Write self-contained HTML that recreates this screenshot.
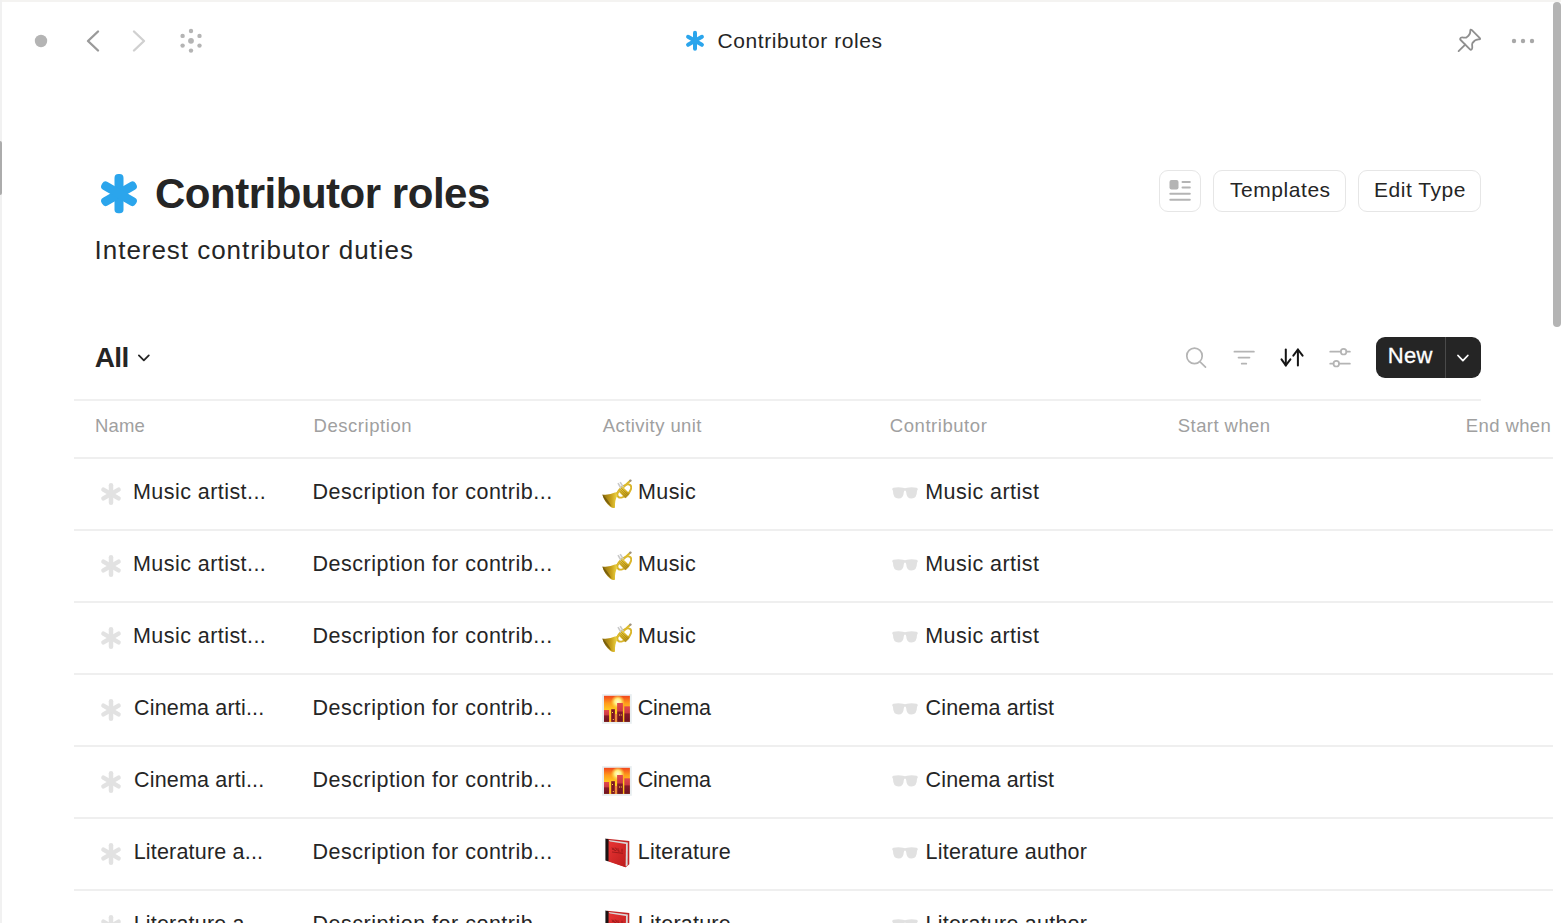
<!DOCTYPE html>
<html><head><meta charset="utf-8"><title>Contributor roles</title>
<style>
html,body{margin:0;padding:0;width:1561px;height:923px;overflow:hidden;background:#fff;font-family:"Liberation Sans",sans-serif;color:#252525}
.a{position:absolute}
.t{position:absolute;white-space:nowrap;line-height:1}
.hd{font-size:18.5px;color:#a0a0a0;top:417px}
.rw{font-size:21.5px;color:#252525}
.ln{position:absolute;left:74px;width:1479px;height:2px;background:#efefef}
.btn{position:absolute;top:170px;height:42px;box-sizing:border-box;border:1.5px solid #e6e6e6;border-radius:9px}
</style></head><body>
<!-- frame -->
<div class="a" style="left:0;top:0;width:1561px;height:2px;background:#f4f3f1"></div>
<div class="a" style="left:0;top:0;width:2px;height:923px;background:#f1f1f1"></div>
<div class="a" style="left:0;top:141px;width:2px;height:54px;background:#acacac;border-radius:0 2px 2px 0"></div>
<div class="a" style="left:1553px;top:2px;width:8px;height:324.5px;background:#b4b4b4;border-radius:4px"></div>

<!-- top bar -->
<svg class="a" style="left:0;top:0" width="240" height="80" viewBox="0 0 240 80">
  <circle cx="41" cy="41" r="6.2" fill="#b4b4b4"/>
  <polyline points="98,31.5 88,41 98,50.5" fill="none" stroke="#9a9a9a" stroke-width="2.4" stroke-linecap="round" stroke-linejoin="round"/>
  <polyline points="134,31.5 144,41 134,50.5" fill="none" stroke="#d0d0d0" stroke-width="2.4" stroke-linecap="round" stroke-linejoin="round"/>
  <g fill="#b4b4b4">
    <circle cx="191" cy="31" r="2.2"/><circle cx="191" cy="50.6" r="2.2"/>
    <circle cx="182.6" cy="35.9" r="2.2"/><circle cx="182.6" cy="45.6" r="2.2"/>
    <circle cx="199.5" cy="35.9" r="2.2"/><circle cx="199.5" cy="45.6" r="2.2"/>
    <circle cx="191" cy="40.8" r="2.9"/>
  </g>
</svg>
<svg class="a" style="left:680px;top:26px" width="30" height="30" viewBox="0 0 30 30">
  <g stroke="#2ba5ec" stroke-width="4" stroke-linecap="round">
    <line x1="15" y1="6.8" x2="15" y2="22.8"/>
    <line x1="8.07" y1="10.8" x2="21.93" y2="18.8"/>
    <line x1="8.07" y1="18.8" x2="21.93" y2="10.8"/>
  </g>
</svg>
<div class="t" style="left:717.6px;top:29.5px;font-size:21px;letter-spacing:0.58px">Contributor roles</div>
<svg class="a" style="left:1440px;top:20px" width="110" height="40" viewBox="0 0 110 40">
  <g transform="translate(30.5 19.25) rotate(45)" fill="none" stroke="#8f8f8f" stroke-width="1.8" stroke-linejoin="round" stroke-linecap="round">
    <path d="M-5.8 -7.4 L5.8 -7.4 Q7.2 -7.2 6.3 -6 C4.2 -4.2 3.6 -1.5 4.1 1.4 C4.8 3.6 7.8 4 7.9 6 Q7.9 7.5 6.8 7.5 L-6.8 7.5 Q-7.9 7.5 -7.9 6 C-7.8 4 -4.8 3.6 -4.1 1.4 C-3.6 -1.5 -4.2 -4.2 -6.3 -6 Q-7.2 -7.2 -5.8 -7.4 Z"/>
    <line x1="0" y1="7.5" x2="0" y2="16.8"/>
  </g>
  <g fill="#a8a8a8"><circle cx="74" cy="21" r="2.2"/><circle cx="83" cy="21" r="2.2"/><circle cx="92" cy="21" r="2.2"/></g>
</svg>

<!-- title -->
<svg class="a" style="left:99px;top:174px" width="40" height="40" viewBox="0 0 40 40">
  <g fill="#2ba5ec">
    <rect x="15.5" y="0.1" width="9" height="39.2" rx="3.8"/>
    <rect x="15.5" y="0.1" width="9" height="39.2" rx="3.8" transform="rotate(60 20 19.7)"/>
    <rect x="15.5" y="0.1" width="9" height="39.2" rx="3.8" transform="rotate(-60 20 19.7)"/>
  </g>
</svg>
<div class="t" style="left:155px;top:173px;font-size:42px;font-weight:bold;letter-spacing:-0.48px">Contributor roles</div>
<div class="t" style="left:94.6px;top:237px;font-size:26px;letter-spacing:0.96px">Interest contributor duties</div>

<!-- buttons -->
<div class="btn" style="left:1159px;width:42px"></div>
<svg class="a" style="left:1159px;top:170px" width="42" height="42" viewBox="0 0 42 42">
  <rect x="10.5" y="10" width="9" height="9.5" rx="2" fill="#b4b4b4"/>
  <g stroke="#b4b4b4" stroke-width="2" stroke-linecap="round">
    <line x1="23.5" y1="11.9" x2="30.8" y2="11.9"/>
    <line x1="23.5" y1="17.5" x2="30.8" y2="17.5"/>
    <line x1="11.3" y1="23.7" x2="30.8" y2="23.7"/>
    <line x1="11.3" y1="29.7" x2="30.8" y2="29.7"/>
  </g>
</svg>
<div class="btn" style="left:1213px;width:133px"></div>
<div class="t" style="left:1230px;top:179px;font-size:21px;letter-spacing:0.55px">Templates</div>
<div class="btn" style="left:1358px;width:123px"></div>
<div class="t" style="left:1374px;top:179px;font-size:21px;letter-spacing:0.54px">Edit Type</div>

<!-- view bar -->
<div class="t" style="left:94.8px;top:344px;font-size:28px;font-weight:bold;letter-spacing:-0.67px">All</div>
<svg class="a" style="left:130px;top:345px" width="30" height="25" viewBox="0 0 30 25">
  <polyline points="8.9,10.4 13.85,15.3 18.8,10.4" fill="none" stroke="#252525" stroke-width="1.8" stroke-linecap="round" stroke-linejoin="round"/>
</svg>
<svg class="a" style="left:1170px;top:330px" width="200" height="50" viewBox="0 0 200 50">
  <g fill="none" stroke="#b4b4b4" stroke-width="1.7" stroke-linecap="round">
    <circle cx="24.5" cy="25.9" r="7.7"/>
    <line x1="30.6" y1="32.4" x2="35.5" y2="37.2"/>
    <line x1="64.4" y1="21.7" x2="83.9" y2="21.7"/>
    <line x1="68.5" y1="27.6" x2="79.5" y2="27.6"/>
    <line x1="71.7" y1="33.7" x2="76.3" y2="33.7"/>
  </g>
  <g fill="none" stroke="#151515" stroke-width="2" stroke-linecap="round" stroke-linejoin="round">
    <line x1="115.8" y1="19.4" x2="115.8" y2="35.4"/>
    <polyline points="111.5,29.3 115.8,35.4 120.4,29.3"/>
    <line x1="127.9" y1="19.5" x2="127.9" y2="35.6"/>
    <polyline points="123.3,25.7 127.9,19.5 132.6,25.7"/>
  </g>
  <g fill="none" stroke="#b4b4b4" stroke-width="1.7" stroke-linecap="round">
    <line x1="160.2" y1="21.7" x2="170.8" y2="21.7"/>
    <line x1="176.4" y1="21.7" x2="179.9" y2="21.7"/>
    <circle cx="173.6" cy="21.7" r="2.8"/>
    <line x1="160.2" y1="33.7" x2="163.5" y2="33.7"/>
    <line x1="169.1" y1="33.7" x2="179.9" y2="33.7"/>
    <circle cx="166.3" cy="33.7" r="2.8"/>
  </g>
</svg>
<div class="a" style="left:1376px;top:337px;width:105px;height:41px;background:#252525;border-radius:9px"></div>
<div class="a" style="left:1445px;top:337px;width:1px;height:41px;background:#4a4a4a"></div>
<div class="t" style="left:1387.8px;top:345px;font-size:22px;letter-spacing:0.3px;color:#fff;-webkit-text-stroke:0.3px #fff">New</div>
<svg class="a" style="left:1446px;top:337px" width="35" height="41" viewBox="0 0 35 41">
  <polyline points="12,18.5 16.9,23.6 21.8,18.5" fill="none" stroke="#fff" stroke-width="1.8" stroke-linecap="round" stroke-linejoin="round"/>
</svg>

<!-- table -->
<div class="a" style="left:74px;top:399px;width:1407px;height:2px;background:#f0f0f0"></div>
<div class="t hd" style="left:94.9px;letter-spacing:0.2px">Name</div>
<div class="t hd" style="left:313.5px;letter-spacing:0.55px">Description</div>
<div class="t hd" style="left:602.8px;letter-spacing:0.43px">Activity unit</div>
<div class="t hd" style="left:889.8px;letter-spacing:0.55px">Contributor</div>
<div class="t hd" style="left:1177.8px;letter-spacing:0.43px">Start when</div>
<div class="t hd" style="left:1465.8px;letter-spacing:0.39px">End when</div>
<div class="ln" style="top:457px"></div>
<div class="ln" style="top:529px"></div>
<div class="ln" style="top:601px"></div>
<div class="ln" style="top:673px"></div>
<div class="ln" style="top:745px"></div>
<div class="ln" style="top:817px"></div>
<div class="ln" style="top:889px"></div>

<svg width="0" height="0" style="position:absolute">
<defs>
<linearGradient id="gold" x1="0" y1="0" x2="1" y2="1"><stop offset="0" stop-color="#f3dc5a"/><stop offset="0.5" stop-color="#d9b324"/><stop offset="1" stop-color="#9c7a12"/></linearGradient>
<linearGradient id="bellg" x1="0" y1="0" x2="1" y2="0"><stop offset="0" stop-color="#8a6a0c"/><stop offset="0.6" stop-color="#c9a21c"/><stop offset="1" stop-color="#f0d848"/></linearGradient>
<linearGradient id="sky" x1="0" y1="0" x2="0" y2="1"><stop offset="0" stop-color="#f2441c"/><stop offset="0.28" stop-color="#ff9a1c"/><stop offset="0.6" stop-color="#ffd420"/><stop offset="1" stop-color="#ffb81a"/></linearGradient>
<radialGradient id="sun" cx="0.5" cy="0.5" r="0.5"><stop offset="0" stop-color="#fffbd0"/><stop offset="0.45" stop-color="#fff080"/><stop offset="1" stop-color="#ffe040" stop-opacity="0"/></radialGradient>
<linearGradient id="bld" x1="0" y1="0" x2="0" y2="1"><stop offset="0" stop-color="#e2484c"/><stop offset="0.4" stop-color="#cc3a42"/><stop offset="0.5" stop-color="#861a2a"/><stop offset="1" stop-color="#6e1222"/></linearGradient>
<linearGradient id="bookg" x1="0" y1="0" x2="1" y2="1"><stop offset="0" stop-color="#e83434"/><stop offset="1" stop-color="#bd1d1d"/></linearGradient>
<symbol id="music" viewBox="0 0 30 30">
  <ellipse cx="22.3" cy="12" rx="8.4" ry="4.6" transform="rotate(-43 22.3 12)" fill="none" stroke="#d9b52a" stroke-width="1.9"/>
  <line x1="13" y1="16" x2="28.2" y2="1.8" stroke="#dcba2c" stroke-width="2.1" stroke-linecap="round"/>
  <g stroke="#c8c8c8" stroke-width="1.6"><line x1="16" y1="4.2" x2="19.5" y2="10"/><line x1="18.2" y1="3.2" x2="21.4" y2="8.4"/></g>
  <polygon points="27.8,14.8 23.3,19.3 16.2,12.2 20.7,7.7" fill="url(#gold)"/>
  <g stroke="#9e7e12" stroke-width="0.7"><line x1="18.1" y1="10.3" x2="25.2" y2="17.4"/><line x1="19.2" y1="9.1" x2="26.3" y2="16.2"/><line x1="17" y1="11.4" x2="24.1" y2="18.5"/></g>
  <path d="M0.3 15.4 Q7 16.4 13.6 13.2 L15.4 16.4 Q12.6 21 13 28.6 Q11.5 30 8 27.5 Q2 22 0.3 15.4 Z" fill="url(#bellg)"/>
  <path d="M0.5 15.8 Q2.5 23 9.5 27.5 Q5.2 19.5 0.5 15.8 Z" fill="#5e4a08" opacity="0.6"/>
  <circle cx="28.4" cy="1.6" r="1.2" fill="#9a8f86"/>
</symbol>
<symbol id="city" viewBox="0 0 30 30">
  <rect x="0.1" y="0.15" width="29.7" height="29.65" fill="#e8eef0"/>
  <rect x="2" y="1.8" width="25.9" height="26.1" fill="url(#sky)"/>
  <circle cx="15.8" cy="7.8" r="7" fill="url(#sun)"/>
  <path d="M2 16 L7.1 16 L7.1 27.9 L2 27.9 Z" fill="url(#bld)"/>
  <rect x="9.2" y="15.2" width="3.7" height="12.7" fill="#7e1626"/>
  <path d="M15.1 9 L20.9 9 L20.9 27.9 L15.1 27.9 Z" fill="url(#bld)"/>
  <path d="M22.3 12.3 L27.9 12.3 L27.9 27.9 L22.3 27.9 Z" fill="url(#bld)"/>
  <rect x="12.9" y="20" width="2.2" height="7.9" fill="#f08a3a"/>
  <g fill="#ffd24a"><rect x="10" y="18" width="1" height="1"/><rect x="17" y="20.5" width="1" height="1"/><rect x="18.8" y="20.5" width="1" height="1"/><rect x="10.8" y="25" width="1" height="1"/></g>
</symbol>
<symbol id="book" viewBox="0 0 30 30">
  <polygon points="5,0.8 27.3,3 27.3,26.3 23.8,29.2 5,22.6" fill="#c42626"/>
  <polygon points="6.5,2 25.8,4.6 25.6,27.2 23.6,28.6" fill="#d9d9d9"/>
  <polygon points="6.5,3.2 24,6 23.6,29.2 6.5,23.4" fill="url(#bookg)"/>
  <polygon points="3.4,0.6 6.5,1.2 6.5,23.4 3.4,22.4" fill="#1c1414"/>
  <g stroke="#7a1010" stroke-width="0.7" fill="none" opacity="0.8"><path d="M10 9.5 L11 12 L12 9.7 M13 10 Q14.6 10 14.6 11.3 Q14.6 12.6 13 12.6 Q11.8 12.4 12.2 11.1 M16 10.3 L16 13 L17.6 13.2 M20 10.8 L20 13.8"/><line x1="10" y1="14" x2="21" y2="15.3"/></g>
</symbol>
</defs></svg>
<svg width="0" height="0" style="position:absolute">
<defs>
<symbol id="ast" viewBox="0 0 24 24"><g stroke="#e2e2e2" stroke-width="4.5" stroke-linecap="round"><line x1="12" y1="3.25" x2="12" y2="20.75"/><line x1="4.42" y1="7.62" x2="19.58" y2="16.38"/><line x1="4.42" y1="16.38" x2="19.58" y2="7.62"/></g></symbol>
<symbol id="gls" viewBox="0 0 26 12"><path fill="#e1e1e1" d="M0.2 2.2 Q0.3 1 1.5 0.8 Q6.5 -0.3 11 0.8 Q13 1.5 15 0.8 Q19.5 -0.3 24.5 0.8 Q25.7 1 25.8 2.2 L25.5 3.2 L25 3.5 Q25.2 11.5 19.5 11.5 Q14.5 11.5 14.2 5.2 Q14 3.4 13 3.4 Q12 3.4 11.8 5.2 Q11.5 11.5 6.5 11.5 Q0.8 11.5 1 3.5 L0.5 3.2 Z"/></symbol>
</defs></svg>
<svg class="a" style="left:98.5px;top:482px" width="24" height="24"><use href="#ast"/></svg>
<div class="t rw" style="left:133.0px;top:482.4px;letter-spacing:0.44px">Music artist...</div>
<div class="t rw" style="left:312.6px;top:482.4px;letter-spacing:0.5px">Description for contrib...</div>
<svg class="a" style="left:602px;top:479px" width="30" height="30"><use href="#music"/></svg>
<div class="t rw" style="left:638.0px;top:482.4px;letter-spacing:0.4px">Music</div>
<svg class="a" style="left:892px;top:487.3px" width="26" height="12"><use href="#gls"/></svg>
<div class="t rw" style="left:925.2px;top:482.4px;letter-spacing:0.46px">Music artist</div>
<svg class="a" style="left:98.5px;top:554px" width="24" height="24"><use href="#ast"/></svg>
<div class="t rw" style="left:133.0px;top:554.4px;letter-spacing:0.44px">Music artist...</div>
<div class="t rw" style="left:312.6px;top:554.4px;letter-spacing:0.5px">Description for contrib...</div>
<svg class="a" style="left:602px;top:551px" width="30" height="30"><use href="#music"/></svg>
<div class="t rw" style="left:638.0px;top:554.4px;letter-spacing:0.4px">Music</div>
<svg class="a" style="left:892px;top:559.3px" width="26" height="12"><use href="#gls"/></svg>
<div class="t rw" style="left:925.2px;top:554.4px;letter-spacing:0.46px">Music artist</div>
<svg class="a" style="left:98.5px;top:626px" width="24" height="24"><use href="#ast"/></svg>
<div class="t rw" style="left:133.0px;top:626.4px;letter-spacing:0.44px">Music artist...</div>
<div class="t rw" style="left:312.6px;top:626.4px;letter-spacing:0.5px">Description for contrib...</div>
<svg class="a" style="left:602px;top:623px" width="30" height="30"><use href="#music"/></svg>
<div class="t rw" style="left:638.0px;top:626.4px;letter-spacing:0.4px">Music</div>
<svg class="a" style="left:892px;top:631.3px" width="26" height="12"><use href="#gls"/></svg>
<div class="t rw" style="left:925.2px;top:626.4px;letter-spacing:0.46px">Music artist</div>
<svg class="a" style="left:98.5px;top:698px" width="24" height="24"><use href="#ast"/></svg>
<div class="t rw" style="left:134.0px;top:698.4px;letter-spacing:0.18px">Cinema arti...</div>
<div class="t rw" style="left:312.6px;top:698.4px;letter-spacing:0.5px">Description for contrib...</div>
<svg class="a" style="left:602px;top:694px" width="30" height="30"><use href="#city"/></svg>
<div class="t rw" style="left:637.7px;top:698.4px;letter-spacing:-0.18px">Cinema</div>
<svg class="a" style="left:892px;top:703.3px" width="26" height="12"><use href="#gls"/></svg>
<div class="t rw" style="left:925.6px;top:698.4px;letter-spacing:0.15px">Cinema artist</div>
<svg class="a" style="left:98.5px;top:770px" width="24" height="24"><use href="#ast"/></svg>
<div class="t rw" style="left:134.0px;top:770.4px;letter-spacing:0.18px">Cinema arti...</div>
<div class="t rw" style="left:312.6px;top:770.4px;letter-spacing:0.5px">Description for contrib...</div>
<svg class="a" style="left:602px;top:766px" width="30" height="30"><use href="#city"/></svg>
<div class="t rw" style="left:637.7px;top:770.4px;letter-spacing:-0.18px">Cinema</div>
<svg class="a" style="left:892px;top:775.3px" width="26" height="12"><use href="#gls"/></svg>
<div class="t rw" style="left:925.6px;top:770.4px;letter-spacing:0.15px">Cinema artist</div>
<svg class="a" style="left:98.5px;top:842px" width="24" height="24"><use href="#ast"/></svg>
<div class="t rw" style="left:133.7px;top:842.4px;letter-spacing:0.19px">Literature a...</div>
<div class="t rw" style="left:312.6px;top:842.4px;letter-spacing:0.5px">Description for contrib...</div>
<svg class="a" style="left:602px;top:838px" width="30" height="30"><use href="#book"/></svg>
<div class="t rw" style="left:637.8px;top:842.4px;letter-spacing:0.23px">Literature</div>
<svg class="a" style="left:892px;top:847.3px" width="26" height="12"><use href="#gls"/></svg>
<div class="t rw" style="left:925.5px;top:842.4px;letter-spacing:0.23px">Literature author</div>
<svg class="a" style="left:98.5px;top:914px" width="24" height="24"><use href="#ast"/></svg>
<div class="t rw" style="left:133.7px;top:914.4px;letter-spacing:0.19px">Literature a...</div>
<div class="t rw" style="left:312.6px;top:914.4px;letter-spacing:0.5px">Description for contrib...</div>
<svg class="a" style="left:602px;top:910px" width="30" height="30"><use href="#book"/></svg>
<div class="t rw" style="left:637.8px;top:914.4px;letter-spacing:0.23px">Literature</div>
<svg class="a" style="left:892px;top:919.3px" width="26" height="12"><use href="#gls"/></svg>
<div class="t rw" style="left:925.5px;top:914.4px;letter-spacing:0.23px">Literature author</div>
</body></html>
